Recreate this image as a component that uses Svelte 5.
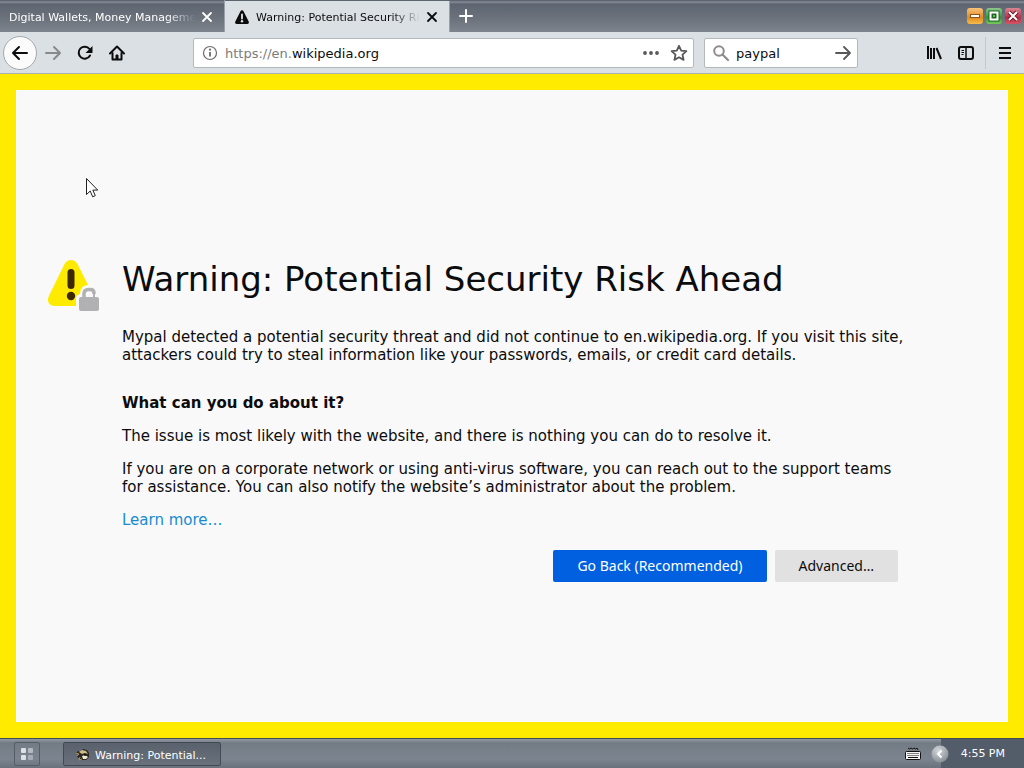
<script>
	let search = 'paypal';
	let active = 1;

	const tabs = [
		{ title: 'Digital Wallets, Money Management', warn: false },
		{ title: 'Warning: Potential Security Risk', warn: true }
	];
</script>

<div class="screen">
	<header class="titlebar">
		<div class="tabs">
			{#each tabs as tab, i}
				<div class="tab" class:active={i == active}>
					{#if tab.warn}
						<svg width="16" height="16" viewBox="0 0 16 16" aria-hidden="true">
							<path d="M8 1.2c.7 0 1.2.4 1.5 1l5.2 10.3c.6 1.200-.1 2.500-1.400 2.500H2.700c-1.300 0-2-1.300-1.400-2.500L6.500 2.200c.3-.6.8-1 1.500-1z" fill="#0c0c0d" />
							<path d="M8 5.500v4" stroke="#dbe0e5" stroke-width="1.900" stroke-linecap="round" />
							<circle cx="8" cy="12.300" r="1.200" fill="#dbe0e5" />
						</svg>
					{/if}
					<button class="title" on:click={() => (active = i)}>{tab.title}</button>
					<button class="close" aria-label="Close tab">
						<svg width="12" height="12" viewBox="0 0 12 12"><path d="M2 2l8 8M10 2l-8 8" stroke="currentColor" stroke-width="1.800" stroke-linecap="round" /></svg>
					</button>
				</div>
			{/each}
		</div>
		<button class="newtab" aria-label="New tab">
			<svg width="16" height="16" viewBox="0 0 16 16"><path d="M8 2v12M2 8h12" stroke="#fff" stroke-width="2" stroke-linecap="round" /></svg>
		</button>
		<div class="controls">
			<button class="min" aria-label="Minimize">
				<svg width="16" height="16" viewBox="0 0 16 16"><rect x="3.500" y="6.500" width="9" height="3" fill="#fff" stroke="#8f5418" /></svg>
			</button>
			<button class="max" aria-label="Maximize">
				<svg width="16" height="16" viewBox="0 0 16 16"><rect x="4.500" y="4.500" width="7" height="7" fill="none" stroke="#1f6420" stroke-width="4" /><rect x="4.500" y="4.500" width="7" height="7" fill="none" stroke="#fff" stroke-width="2" /><rect x="6.500" y="6.500" width="3" height="3" fill="#65b656" stroke="#1f6420" /></svg>
			</button>
			<button class="quit" aria-label="Close">
				<svg width="16" height="16" viewBox="0 0 16 16"><path d="M4 4l8 8M12 4l-8 8" stroke="#701b27" stroke-width="4" /><path d="M4 4l8 8M12 4l-8 8" stroke="#fff" stroke-width="2" /></svg>
			</button>
		</div>
	</header>

	<nav class="toolbar">
		<div class="nav">
			<button class="back" aria-label="Back">
				<svg width="18" height="16" viewBox="0 0 18 16"><path d="M16 8H2M8 2L2 8l6 6" /></svg>
			</button>
			<button class="forward" aria-label="Forward" disabled>
				<svg width="18" height="16" viewBox="0 0 18 16"><path d="M2 8h14M10 2l6 6-6 6" /></svg>
			</button>
			<button aria-label="Reload">
				<svg width="16" height="16" viewBox="0 0 16 16"><path d="M13 10.500A6 6 0 1 1 12.500 4" /><path d="M15.500 1v7h-7z" fill="#0c0c0d" stroke="none" /></svg>
			</button>
			<button aria-label="Home">
				<svg width="16" height="16" viewBox="0 0 16 16"><path d="M1 8.500L8 1.500l7 7" /><path d="M3.500 8v6.500h9V8" /><path d="M7 14v-4h2v4z" fill="#0c0c0d" stroke-width="1" /></svg>
			</button>
		</div>

		<div class="field url">
			<svg width="16" height="16" viewBox="0 0 16 16" aria-hidden="true"><circle cx="8" cy="8" r="6.500" fill="none" stroke="#6b6b6c" stroke-width="1.200" /><path d="M8 7v4.500" stroke="#6b6b6c" stroke-width="1.800" /><circle cx="8" cy="4.700" r="1.100" fill="#6b6b6c" /></svg>
			<div class="address"><span>https://en.</span>wikipedia.org</div>
			<button aria-label="Page actions">
				<svg width="18" height="16" viewBox="0 0 18 16" fill="#58585a"><circle cx="3" cy="8" r="1.900" /><circle cx="9" cy="8" r="1.900" /><circle cx="15" cy="8" r="1.900" /></svg>
			</button>
			<button aria-label="Bookmark this page">
				<svg width="18" height="18" viewBox="0 0 18 18"><path d="M9 1.800l2.200 4.800 5.200.6-3.900 3.500 1.100 5.200L9 13.300l-4.600 2.600 1.100-5.200-3.900-3.500 5.200-.6z" fill="none" stroke="#58585a" stroke-width="1.800" stroke-linejoin="round" /></svg>
			</button>
		</div>

		<div class="field search">
			<svg width="18" height="18" viewBox="0 0 18 18" aria-hidden="true"><circle cx="7" cy="7" r="4.800" fill="none" stroke="#8d8d8e" stroke-width="2" /><path d="M10.500 10.500l5.500 5.500" stroke="#8d8d8e" stroke-width="2.200" stroke-linecap="round" /></svg>
			<input type="text" aria-label="Search" bind:value={search} />
			<button aria-label="Go">
				<svg width="18" height="16" viewBox="0 0 18 16"><path d="M2 8h14M10 2l6 6-6 6" fill="none" stroke="#58585a" stroke-width="1.800" stroke-linecap="round" stroke-linejoin="round" /></svg>
			</button>
		</div>

		<div class="tools">
			<button aria-label="Library">
				<svg width="16" height="16" viewBox="0 0 16 16"><path d="M2 1v13M5 3v11M8 3v11M10.500 3l4.500 11" /></svg>
			</button>
			<button aria-label="Sidebars">
				<svg width="16" height="16" viewBox="0 0 16 16"><rect x="1" y="2" width="14" height="12" rx="2" /><path d="M8 2v12" stroke-width="1.500" /><path d="M3.500 5.500h2.500M3.500 7.500h2.500M3.500 9.500h2" stroke-width="1" /></svg>
			</button>
		</div>
		<button class="menu" aria-label="Open menu">
			<svg width="16" height="16" viewBox="0 0 16 16"><path d="M2 3h12M2 8h12M2 13h12" /></svg>
		</button>
	</nav>

	<main>
		<svg class="badge" width="54" height="54" viewBox="0 0 54 54" aria-hidden="true">
			<path d="M23 1c3 0 5.200 1.600 6.600 4.300l15.800 31.500c2.700 5.300-.4 10.200-6 10.200H6.600c-5.600 0-8.200-4.900-5.600-10.200L16.400 5.300C17.800 2.600 20 1 23 1z" fill="#ffeb00" />
			<path d="M23 13.500v13" stroke="#3e2800" stroke-width="7" stroke-linecap="round" />
			<circle cx="23" cy="37" r="4.200" fill="#3e2800" />
			<path d="M28 55V39q0-3 4-4 0-9 9-9 9 0 9 9l3 3v17z" fill="#f9f9fa" />
			<path d="M36 40v-5q0-4.500 4.500-4.500H42q4 0 4 3.500v1" fill="none" stroke="#b1b1b3" stroke-width="3.500" />
			<path d="M46 32v7" stroke="#b1b1b3" stroke-width="2" />
			<rect x="31" y="38" width="20" height="14" rx="2" fill="#b1b1b3" />
		</svg>
		<article>
			<h1>Warning: Potential Security Risk Ahead</h1>
			<p>Mypal detected a potential security threat and did not continue to en.wikipedia.org. If you visit this site, attackers could try to steal information like your passwords, emails, or credit card details.</p>
			<h2>What can you do about it?</h2>
			<p>The issue is most likely with the website, and there is nothing you can do to resolve it.</p>
			<p>If you are on a corporate network or using anti-virus software, you can reach out to the support teams for assistance. You can also notify the website’s administrator about the problem.</p>
			<p><a href="#learn">Learn more…</a></p>
			<div class="actions">
				<button class="primary">Go Back (Recommended)</button>
				<button>Advanced…</button>
			</div>
		</article>
		<svg class="pointer" width="14" height="22" viewBox="0 0 14 22" aria-hidden="true">
			<path d="M1.500 1.500v16l3.700-3.500 2.500 5.800 2.600-1.200-2.500-5.500h4.900z" fill="#fff" stroke="#222" />
		</svg>
	</main>

	<footer class="taskbar">
		<button class="start" aria-label="Start">
			<svg width="14" height="14" viewBox="0 0 14 14" fill="#dde1e6"><rect x="1" y="1" width="5" height="5" rx="1" /><rect x="8" y="1" width="5" height="5" rx="1" opacity=".6" /><rect x="1" y="8" width="5" height="5" rx="1" /><rect x="8" y="8" width="5" height="5" rx="1" opacity=".45" /></svg>
		</button>
		<button class="task">
			<svg width="16" height="14" viewBox="0 0 16 14" aria-hidden="true">
				<path d="M1 5l2-2 2 1 3-3 4 1 2 3v4l-3 3H6L4 10 2 9l2-3z" fill="#2b2620" />
				<path d="M4 4l3-2 4 1 2 3-3-1-3 1z" fill="#cfbd86" />
				<path d="M7 8l3-1 3 2-2 2H8z" fill="#f0ead4" />
				<path d="M1 5l3 1-2 2M5 9l-1 3 3-1" fill="none" stroke="#a89055" />
				<circle cx="10" cy="7" r="1" fill="#111" />
			</svg>
			Warning: Potential...
		</button>
		<div class="spacer"></div>
		<svg class="keyboard" width="16" height="14" viewBox="0 0 16 14" aria-hidden="true">
			<path d="M3 1l1.500 1L6 1l1.500 1L9 1l1.500 1L12 1l1 2" fill="none" stroke="#111" />
			<rect x=".5" y="4.500" width="15" height="8" rx="1" fill="#f4f4f4" stroke="#111" />
			<path d="M2.500 6.500h11M2.500 8.500h11" stroke="#111" stroke-dasharray="1 1" />
			<path d="M3 10.500h10" stroke="#111" />
		</svg>
		<div class="tray">
			<button aria-label="Show hidden icons">
				<svg width="18" height="18" viewBox="0 0 18 18">
					<defs>
						<radialGradient id="ball" cx=".4" cy=".3" r=".7"><stop stop-color="#d4d7db" /><stop offset="1" stop-color="#8a9097" /></radialGradient>
					</defs>
					<circle cx="9" cy="9" r="8.500" fill="url(#ball)" />
					<path d="M10.500 5.500L7 9l3.500 3.500" fill="none" stroke="#fff" stroke-width="2" />
				</svg>
			</button>
			<time>4:55 PM</time>
		</div>
	</footer>
</div>

<style>
	:global(body) {
		margin: 0;
	}

	.screen {
		min-height: 100vh;
		display: flex;
		flex-direction: column;
		font-family: 'DejaVu Sans', Verdana, sans-serif;
		font-size: 11px;
		color: #0c0c0d;
	}

	button {
		border: 0;
		padding: 0;
		background: none;
		color: inherit;
		font: inherit;
	}

	svg {
		display: block;
		flex: none;
	}

	.titlebar {
		display: flex;
		height: 32px;
		background: linear-gradient(#4e5661, #878e98 2px, #5d6570 4px, #6d747e 20px, #7d848e);
	}

	.tabs {
		display: flex;
		min-width: 0;
	}

	.tab {
		box-sizing: border-box;
		width: 225px;
		display: flex;
		align-items: center;
		gap: 6px;
		padding: 2px 11px 0 9px;
		border-right: 1px solid #9aa1aa;
		color: #fff;
	}

	.tab.active {
		margin-top: 1px;
		padding-top: 1px;
		background: #dbe0e5;
		color: #0c0c0d;
	}

	.title {
		flex: 1;
		min-width: 0;
		overflow: hidden;
		text-align: left;
		white-space: nowrap;
		mask-image: linear-gradient(to left, transparent, #000 28px);
	}

	.newtab {
		width: 32px;
		display: grid;
		place-items: center;
	}

	.controls {
		display: flex;
		gap: 3px;
		margin-left: auto;
		padding: 8px 3px 0 0;
	}

	.controls button {
		width: 16px;
		height: 16px;
		border-radius: 3px;
		overflow: hidden;
	}

	.min {
		background: linear-gradient(#f9c37c, #e08b20 60%, #f6bd4b);
	}

	.max {
		background: linear-gradient(#8cc98b, #37913a 60%, #79c85c);
	}

	.quit {
		background: linear-gradient(#dc8694, #b52f45 60%, #d95365);
	}

	.toolbar {
		height: 41px;
		display: flex;
		align-items: center;
		background: #dbe0e5;
		border-bottom: 1px solid #a9aeb3;
	}

	.nav,
	.tools {
		display: flex;
		align-items: center;
	}

	.nav button,
	.tools button,
	.menu {
		width: 32px;
		height: 32px;
		display: grid;
		place-items: center;
	}

	.nav svg,
	.tools svg,
	.menu svg {
		fill: none;
		stroke: #0c0c0d;
		stroke-width: 2;
		stroke-linecap: round;
		stroke-linejoin: round;
	}

	.tools svg,
	.menu svg {
		stroke-linecap: butt;
	}

	.nav {
		padding-left: 3px;
		width: 190px;
		box-sizing: border-box;
	}

	.nav .back {
		box-sizing: border-box;
		width: 34px;
		height: 34px;
		border: 1px solid #a3a8ad;
		border-radius: 50%;
		background: #fbfbfc;
	}

	.nav .forward svg {
		stroke: #88898b;
	}

	.field {
		box-sizing: border-box;
		height: 30px;
		display: flex;
		align-items: center;
		background: #fff;
		border: 1px solid #b4b9be;
		border-radius: 2px;
		font-size: 13px;
	}

	.url {
		flex: 1;
		gap: 7px;
		padding: 0 5px 0 8px;
		margin: 0 10px 0 3px;
	}

	.address {
		flex: 1;
		padding-top: 2px;
	}

	.address span {
		color: #7b7b7c;
	}

	.url button:last-child {
		padding-left: 3px;
	}

	.search {
		width: 154px;
		padding: 0 5px 0 7px;
		gap: 6px;
	}

	.search input {
		flex: 1;
		min-width: 0;
		padding: 2px 0 0;
		border: 0;
		outline: 0;
		background: none;
		color: inherit;
		font: inherit;
	}

	.tools {
		margin-left: 60px;
		padding-right: 3px;
		border-right: 1px solid #c3c8cd;
	}

	.menu {
		width: 38px;
	}

	main {
		position: relative;
		flex: 1;
		display: flex;
		align-items: center;
		gap: 20px;
		padding: 61px 32px 32px;
		border: 16px solid #ffeb00;
		background: #f9f9fa;
	}

	.badge {
		margin-bottom: 270px;
	}

	article {
		max-width: 790px;
		font-size: 15px;
		line-height: 18px;
	}

	h1 {
		margin: 0 0 28px;
		font-size: 34px;
		font-weight: 400;
		line-height: 41px;
	}

	h2 {
		margin: 30px 0 15px;
		font-size: 15px;
		line-height: 18px;
	}

	p {
		margin: 0 0 15px;
	}

	a {
		color: #1a8bd0;
		text-decoration: none;
	}

	.actions {
		max-width: 776px;
		display: flex;
		justify-content: flex-end;
		gap: 8px;
		margin-top: 21px;
		font-family: 'Noto Sans', Tahoma, sans-serif;
		font-size: 14px;
	}

	.actions button {
		height: 32px;
		padding: 0 24px;
		border-radius: 2px;
		background: #e1e1e2;
	}

	.actions .primary {
		background: #0060df;
		color: #fff;
	}

	.pointer {
		position: absolute;
		left: 69px;
		top: 87px;
	}

	.taskbar {
		box-sizing: border-box;
		height: 30px;
		display: flex;
		align-items: center;
		border-top: 1px solid #454c55;
		background: linear-gradient(#939aa3, #737b85 4px, #7c858f 20px, #69727c);
		color: #fff;
	}

	.start {
		box-sizing: border-box;
		width: 26px;
		height: 24px;
		margin: 0 23px 0 14px;
		display: grid;
		place-items: center;
		border: 1px solid #555d67;
		border-radius: 2px;
	}

	.task {
		box-sizing: border-box;
		width: 158px;
		height: 24px;
		display: flex;
		align-items: center;
		gap: 4px;
		padding: 3px 0 0 11px;
		border: 1px solid #434a54;
		border-radius: 2px;
		background: linear-gradient(#59616c, #69717c);
		white-space: nowrap;
	}

	.spacer {
		flex: 1;
	}

	.keyboard {
		margin-right: 10px;
	}

	.tray {
		height: 100%;
		display: flex;
		align-items: center;
		gap: 12px;
		padding-right: 19px;
		background: linear-gradient(to right, transparent 10px, #535d69 10px);
	}
</style>
